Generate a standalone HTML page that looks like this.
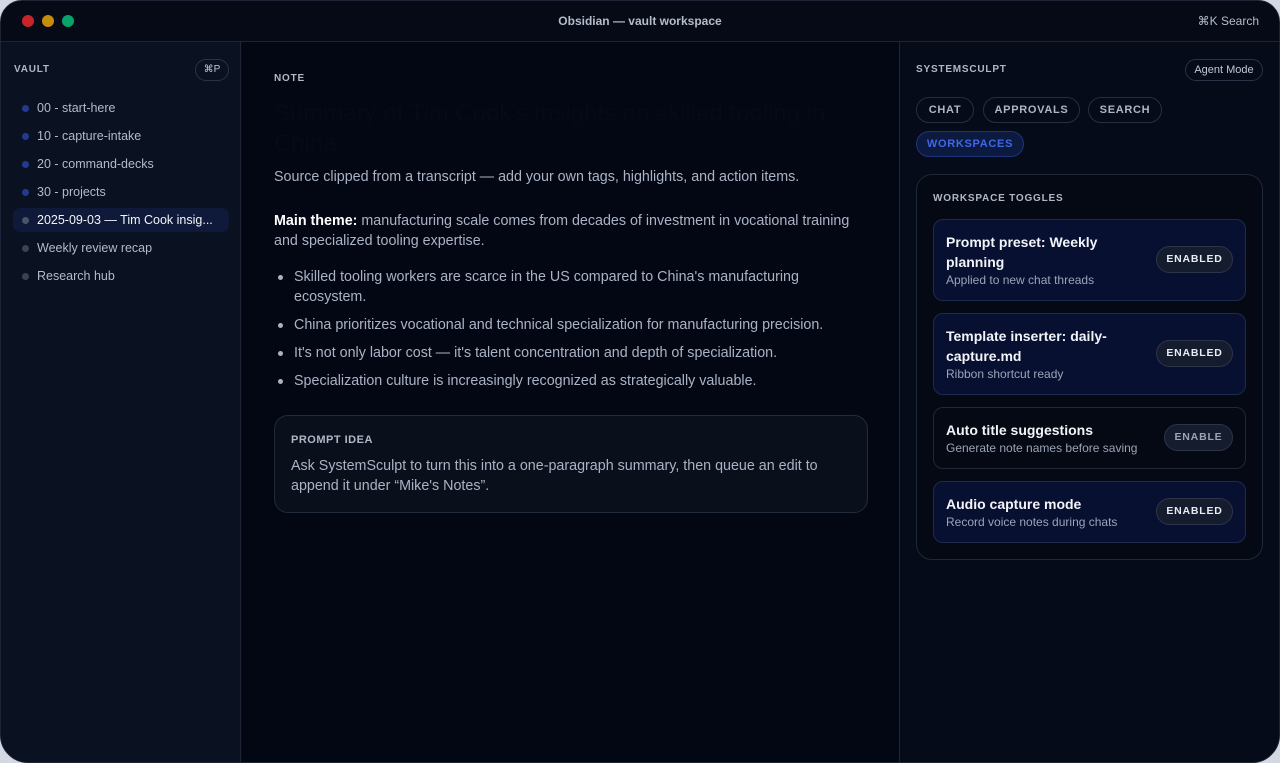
<!DOCTYPE html>
<html><head><meta charset="utf-8"><style>
*{box-sizing:border-box;margin:0;padding:0}
body{width:1280px;height:763px;background:#d3d8e2;font-family:"Liberation Sans",sans-serif;overflow:hidden;position:relative}
.win{position:absolute;left:0;top:0;width:1280px;height:763px;border-radius:22px 22px 28px 28px;background:#050b18;border:1px solid #1c2436;overflow:hidden}
.tb{position:absolute;left:0;top:0;right:0;height:41px;background:#050a16;border-bottom:1px solid #1c2436}
.dot{position:absolute;top:14px;width:12px;height:12px;border-radius:50%}
.tt{position:absolute;left:0;right:0;top:13px;text-align:center;color:#b5bccb;font-size:12px;font-weight:bold}
.ks{position:absolute;right:20px;top:13px;color:#b5bccb;font-size:12px}
.side{position:absolute;left:0;top:41px;width:240px;bottom:0;background:#0a1120;border-right:1px solid #1c2436}
.lab{font-size:10px;font-weight:bold;letter-spacing:.8px;color:#b0b8c8;position:absolute}
.pill{position:absolute;border:1px solid #2a3346;border-radius:12px;color:#c0c7d5;font-size:11px;text-align:center}
.item{position:absolute;left:12px;width:216px;height:24px;border-radius:7px;font-size:12.5px;color:#b2bacb;line-height:24px;padding-left:24px}
.item i{position:absolute;left:9px;top:9px;width:7px;height:7px;border-radius:50%;background:#233a92}
.main{position:absolute;left:241px;top:41px;width:658px;bottom:0;background:#030713;border-right:1px solid #1c2436}
.p{position:absolute;left:32px;width:600px;font-size:14.3px;color:#aab3c5;line-height:20px}
ul.p{list-style:none}
ul.p li{position:relative;padding-left:20px;margin-bottom:8px}
ul.p li:before{content:"";position:absolute;left:4px;top:8px;width:5px;height:5px;border-radius:50%;background:#aab3c5}
.right{position:absolute;left:900px;top:41px;right:0;bottom:0;background:#050b18}
.tab{position:absolute;height:26px;border:1px solid #262f42;border-radius:13px;color:#aeb6c6;font-size:11px;font-weight:bold;letter-spacing:.7px;line-height:24px;text-align:center}
.card{position:absolute;left:16px;top:132px;width:347px;height:386px;border:1px solid #1f2839;border-radius:16px;background:#040913}
.tg{position:absolute;left:16px;width:313px;border-radius:10px;border:1px solid #1e2a4e;background:#071031}
.tg.off{background:#040913;border-color:#1f2839}
.tg b{position:absolute;left:12px;color:#f2f4f8;font-size:14px;line-height:20px;width:200px}
.tg span{position:absolute;left:12px;color:#9aa4b8;font-size:12px}
.btn{position:absolute;right:12px;height:27px;border:1px solid #2c3548;border-radius:14px;background:#141c2e;color:#e8ebf2;font-size:10.5px;font-weight:bold;letter-spacing:.8px;line-height:25px;text-align:center}
</style></head><body>
<div class="win">
<div class="tb">
<div class="dot" style="left:21px;background:#c8242c"></div>
<div class="dot" style="left:41px;background:#c68d0b"></div>
<div class="dot" style="left:61px;background:#07a36a"></div>
<div class="tt">Obsidian — vault workspace</div>
<div class="ks">⌘K Search</div>
</div>
<div class="side">
<div class="lab" style="left:13px;top:22px">VAULT</div>
<div class="pill" style="left:194px;top:17px;width:34px;height:22px;line-height:20px;font-size:10px">⌘P</div>
<div class="item" style="top:54px"><i></i>00 - start-here</div>
<div class="item" style="top:82px"><i></i>10 - capture-intake</div>
<div class="item" style="top:110px"><i></i>20 - command-decks</div>
<div class="item" style="top:138px"><i></i>30 - projects</div>
<div class="item" style="top:166px;background:#0f1a3a;color:#f2f4f8"><i style="background:#4a5468"></i>2025-09-03 — Tim Cook insig...</div>
<div class="item" style="top:194px"><i style="background:#3a4354"></i>Weekly review recap</div>
<div class="item" style="top:222px"><i style="background:#3a4354"></i>Research hub</div>
</div>
<div class="main">
<div class="lab" style="left:32px;top:31px">NOTE</div>
<div class="p" style="top:57px;font-size:24px;line-height:30px;color:#060a17;width:560px">Summary of Tim Cook's insights on skilled tooling in China</div>
<div class="p" style="top:125px">Source clipped from a transcript — add your own tags, highlights, and action items.</div>
<div class="p" style="top:169px;width:592px"><b style="color:#fff">Main theme:</b> manufacturing scale comes from decades of investment in vocational training and specialized tooling expertise.</div>
<ul class="p" style="top:225px;width:560px">
<li>Skilled tooling workers are scarce in the US compared to China's manufacturing ecosystem.</li>
<li>China prioritizes vocational and technical specialization for manufacturing precision.</li>
<li>It's not only labor cost — it's talent concentration and depth of specialization.</li>
<li>Specialization culture is increasingly recognized as strategically valuable.</li>
</ul>
<div style="position:absolute;left:32px;top:373px;width:594px;height:98px;border:1px solid #222b3c;border-radius:14px;background:#0a0f1c">
<div class="lab" style="left:16px;top:18px;font-size:11px;letter-spacing:.5px">PROMPT IDEA</div>
<div class="p" style="left:16px;top:40px;width:560px">Ask SystemSculpt to turn this into a one-paragraph summary, then queue an edit to append it under “Mike's Notes”.</div>
</div>
</div>
<div class="right">
<div class="lab" style="left:15px;top:22px">SYSTEMSCULPT</div>
<div class="pill" style="left:284px;top:17px;width:78px;height:22px;line-height:20px;font-size:11px">Agent Mode</div>
<div class="tab" style="left:15px;top:55px;width:58px">CHAT</div>
<div class="tab" style="left:82px;top:55px;width:97px">APPROVALS</div>
<div class="tab" style="left:187px;top:55px;width:74px">SEARCH</div>
<div class="tab" style="left:15px;top:89px;width:108px;background:#0d1a40;border-color:#1f357a;color:#3f67e8">WORKSPACES</div>
<div class="card" style="left:15px">
<div class="lab" style="left:16px;top:18px">WORKSPACE TOGGLES</div>
<div class="tg" style="top:44px;height:82px"><b style="top:12px">Prompt preset: Weekly planning</b><span style="top:53px">Applied to new chat threads</span><div class="btn" style="top:26px;width:77px">ENABLED</div></div>
<div class="tg" style="top:138px;height:82px"><b style="top:12px">Template inserter: daily-capture.md</b><span style="top:53px">Ribbon shortcut ready</span><div class="btn" style="top:26px;width:77px">ENABLED</div></div>
<div class="tg off" style="top:232px;height:62px"><b style="top:12px">Auto title suggestions</b><span style="top:33px">Generate note names before saving</span><div class="btn" style="top:16px;width:69px;color:#9aa4b8">ENABLE</div></div>
<div class="tg" style="top:306px;height:62px"><b style="top:12px">Audio capture mode</b><span style="top:33px">Record voice notes during chats</span><div class="btn" style="top:16px;width:77px">ENABLED</div></div>
</div>
</div>
</div>
</body></html>
